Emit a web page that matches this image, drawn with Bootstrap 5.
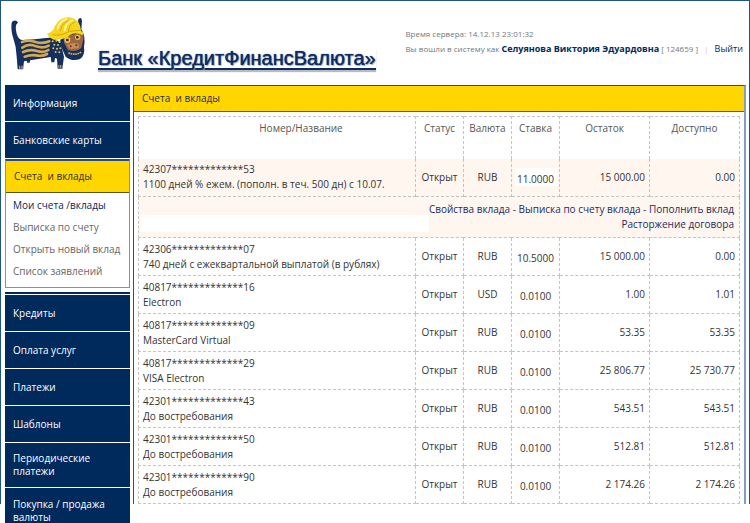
<!DOCTYPE html>
<html lang="ru">
<head>
<meta charset="utf-8">
<meta name="viewport" content="width=device-width, initial-scale=1">
<title>Банк «КредитФинансВалюта»</title>
<link href="https://cdn.jsdelivr.net/npm/bootstrap@5.3.0/dist/css/bootstrap.min.css" rel="stylesheet">
<style>
:root { --navy: #00295c; --gold: #ffd600; --edge: #1f5489; --cream: #fff6ef; }
body { font-family: "Open Sans", "Noto Sans", sans-serif; font-size: 10px; line-height: 15px; color: #333; background: #fff; min-height: 100vh; }
a { color: inherit; text-decoration: none; }
.bank-frame { border: 1px solid var(--edge); border-bottom: 0; }
.bank-top { height: 84px; padding-left: 9px; }
.bank-logo { width: 78px; height: 64px; margin-top: 11px; }
.bank-name { font-family: "Liberation Sans", Arial, sans-serif; font-size: 20px; line-height: 20px; font-weight: 400; color: #0c2c66; border-bottom: 2px solid #0c2c66; box-shadow: 0 2px 1px #bbb; text-shadow: 0 0 1px #0c2c66, 1px 1px 1px #aaa; margin: 47px 0 0 10px; }
.session { font-size: 8px; line-height: 15px; color: #777; margin: 25px 6px 0 0; }
.session a, .session b { font-size: 9px; color: var(--navy); }
.session i { color: #e5b98c; font-style: normal; margin: 0 4px; }
.bank-side { width: 125px; height: 0; margin: 0 3px 0 4px; line-height: 13px; }
.side-item { min-height: 36px; margin-bottom: 1px; padding: 9px 8px; background: var(--navy); color: #fff; }
.side-last { padding-bottom: 0; margin-bottom: 0; }
.side-open { border: 1px solid #7d93b5; border-top: 2px solid #2b4c80; margin-bottom: 4px; }
.side-open .side-item { min-height: 32px; margin: 0; background: var(--gold); color: #2d3320; border-bottom: 1px solid #4c5c20; }
.side-sub { padding: 1px 7px 5px; color: #666; }
.side-sub li { padding: 4px 0; line-height: 14px; white-space: nowrap; }
.side-sub .current { color: var(--navy); }
.side-rule { height: 2px; background: var(--navy); margin-bottom: 1px; }
.bank-main { border: 1px solid var(--edge); border-right: 2px solid #7f9fc4; border-bottom: 0; margin-right: 3px; }
.main-title { font-size: 10px; line-height: 25px; font-weight: 400; background: var(--gold); color: #1f2f40; padding-left: 8px; border-bottom: 1px solid #4c6040; margin-bottom: 4px; }
.accounts-wrap { padding: 0 4px; }
.accounts { table-layout: fixed; width: 100%; border-collapse: collapse; }
.accounts th, .accounts td { border: 1px dashed #c4c4c4; padding: 3px 4px; }
.accounts th { height: 42px; font-weight: 400; color: #555; text-align: center; vertical-align: top; padding-top: 4px; border-bottom: 0; }
.accounts th.c-name { padding-left: 52px; }
.accounts td { height: 38px; }
.accounts .picked td { background: var(--cream); border-top: 0; }
.accounts .c-mid { width: 48px; text-align: center; }
.accounts .c-sum { width: 90px; }
.accounts .sum { text-align: right; }
.accounts .rate { text-align: center; padding-top: 7px; }
.accounts .picked .rate { background: linear-gradient(#fff, #fff) center / 42px 18px no-repeat var(--cream); }
.accounts .acts td { height: 41px; text-align: right; padding: 5px 5px 5px 2px; color: #1b2a63; background: linear-gradient(#fff, #fff) 2px 18px / 288px 17px no-repeat var(--cream); }
</style>
</head>
<body>
<div class="bank-frame">
  <header class="bank-top d-flex align-items-start">
    <svg class="bank-logo flex-shrink-0" viewBox="30 36 234 192" role="img" aria-label="Логотип банка">
      <g fill="#14305f">
        <path d="M35 68C39 58 53 60 54 69C46 73 47 83 49 96C51 109 57 119 67 120L103 118L160 112L182 130L192 170L187 206H173L171 176Q160 170 152 171L72 184L69 208H53L50 170Q49 140 39 112Q32 88 35 68Z"/>
        <path d="M80 174h11l-2 14h-8zM152 168h14l-3 19h-9z"/>
        <path d="M235 58Q245 48 246 63L244 88Q258 110 252 140Q256 166 240 177Q216 186 197 170L178 128L190 98L232 82Z"/>
      </g>
      <g fill="none" stroke="#d7a853" stroke-width="8" stroke-linecap="round">
        <path d="M66 126Q84 119 104 125Q128 133 148 124"/>
        <path d="M67 143Q87 129 108 139Q130 146 146 137"/>
        <path d="M69 156Q90 147 111 153Q131 159 145 150"/>
        <path d="M74 170Q94 163 115 167Q131 168 141 162"/>
      </g>
      <path fill="#9a673e" d="M192 111Q220 107 238 93Q253 98 250 119L244 143Q230 157 204 151L193 130Z"/>
      <path fill="#c98a5c" d="M201 135Q218 125 235 131Q242 149 222 145Q209 151 201 135Z"/>
      <g fill="#f1be52"><circle cx="202" cy="120" r="9"/><circle cx="233" cy="112" r="8"/></g>
      <g fill="#222"><circle cx="202" cy="120" r="4"/><circle cx="232" cy="112" r="4"/></g>
      <g fill="#5c351f"><circle cx="212" cy="139" r="3"/><circle cx="229" cy="136" r="3"/></g>
      <path d="M205 158Q226 168 244 156" fill="none" stroke="#d4b050" stroke-width="5" stroke-dasharray="5 2"/>
      <path fill="#f7d51d" d="M141 101Q161 95 165 78Q179 50 210 52Q240 57 243 93Q254 99 247 105Q225 94 211 105Q190 122 162 119Q148 114 141 101Z"/>
      <path fill="none" stroke="#fff09a" stroke-width="6" stroke-linecap="round" d="M173 86Q178 64 199 58M194 91Q197 69 217 61"/>
      <path fill="none" stroke="#d2a813" stroke-width="3" d="M181 94Q184 72 204 61M205 95Q208 71 225 66M157 104Q185 109 208 94L241 91"/>
      <g fill="#e5c34f"><circle cx="158" cy="124" r="3"/><circle cx="169" cy="122" r="3"/><circle cx="179" cy="126" r="3"/><circle cx="163" cy="134" r="3"/><circle cx="174" cy="135" r="3"/><circle cx="160" cy="145" r="3"/><circle cx="171" cy="146" r="3"/><circle cx="181" cy="145" r="3"/><circle cx="167" cy="156" r="3"/><circle cx="178" cy="157" r="3"/></g>
      <path d="M57 202h13M175 200h12" stroke="#b99a64" stroke-width="10" stroke-dasharray="3 2"/>
    </svg>
    <a href="#" class="bank-name text-nowrap">Банк «КредитФинансВалюта»</a>
    <div class="session ms-auto text-nowrap">
      <div>Время сервера: 14.12.13 23:01:32</div>
      <div>Вы вошли в систему как <b>Селуянова Виктория Эдуардовна</b> [ 124659 ] <i>|</i> <a href="#">Выйти</a></div>
    </div>
  </header>
  <div class="d-flex align-items-start">
    <nav class="bank-side flex-shrink-0" aria-label="Разделы">
      <a href="#" class="side-item d-flex align-items-center">Информация</a>
      <a href="#" class="side-item d-flex align-items-center">Банковские карты</a>
      <div class="side-open">
        <a href="#" class="side-item d-flex align-items-center">Счета&nbsp; и вклады</a>
        <ul class="side-sub list-unstyled mb-0">
          <li class="current"><a href="#">Мои счета /вклады</a></li>
          <li><a href="#">Выписка по счету</a></li>
          <li><a href="#">Открыть новый вклад</a></li>
          <li><a href="#">Список заявлений</a></li>
        </ul>
      </div>
      <div class="side-rule"></div>
      <a href="#" class="side-item d-flex align-items-center">Кредиты</a>
      <a href="#" class="side-item d-flex align-items-center">Оплата услуг</a>
      <a href="#" class="side-item d-flex align-items-center">Платежи</a>
      <a href="#" class="side-item d-flex align-items-center">Шаблоны</a>
      <a href="#" class="side-item d-flex align-items-center">Периодические<br>платежи</a>
      <a href="#" class="side-item side-last d-flex align-items-center">Покупка / продажа<br>валюты</a>
    </nav>
    <main class="bank-main flex-grow-1">
      <h1 class="main-title">Счета&nbsp; и вклады</h1>
      <div class="accounts-wrap">
        <table class="accounts">
          <thead><tr><th class="c-name">Номер/Название</th><th class="c-mid">Статус</th><th class="c-mid">Валюта</th><th class="c-mid">Ставка</th><th class="c-sum">Остаток</th><th class="c-sum">Доступно</th></tr></thead>
          <tbody>
            <tr class="picked"><td>42307*************53<br>1100 дней % ежем. (пополн. в теч. 500 дн) с 10.07.</td><td class="c-mid">Открыт</td><td class="c-mid">RUB</td><td class="rate">11.0000</td><td class="sum">15 000.00</td><td class="sum">0.00</td></tr>
            <tr class="acts"><td colspan="6"><a href="#">Свойства вклада</a> - <a href="#">Выписка по счету вклада</a> - <a href="#">Пополнить вклад</a><br><a href="#">Расторжение договора</a></td></tr>
            <tr><td>42306*************07<br>740 дней с ежеквартальной выплатой (в рублях)</td><td class="c-mid">Открыт</td><td class="c-mid">RUB</td><td class="rate">10.5000</td><td class="sum">15 000.00</td><td class="sum">0.00</td></tr>
            <tr><td>40817*************16<br>Electron</td><td class="c-mid">Открыт</td><td class="c-mid">USD</td><td class="rate">0.0100</td><td class="sum">1.00</td><td class="sum">1.01</td></tr>
            <tr><td>40817*************09<br>MasterCard Virtual</td><td class="c-mid">Открыт</td><td class="c-mid">RUB</td><td class="rate">0.0100</td><td class="sum">53.35</td><td class="sum">53.35</td></tr>
            <tr><td>40817*************29<br>VISA Electron</td><td class="c-mid">Открыт</td><td class="c-mid">RUB</td><td class="rate">0.0100</td><td class="sum">25 806.77</td><td class="sum">25 730.77</td></tr>
            <tr><td>42301*************43<br>До востребования</td><td class="c-mid">Открыт</td><td class="c-mid">RUB</td><td class="rate">0.0100</td><td class="sum">543.51</td><td class="sum">543.51</td></tr>
            <tr><td>42301*************50<br>До востребования</td><td class="c-mid">Открыт</td><td class="c-mid">RUB</td><td class="rate">0.0100</td><td class="sum">512.81</td><td class="sum">512.81</td></tr>
            <tr><td>42301*************90<br>До востребования</td><td class="c-mid">Открыт</td><td class="c-mid">RUB</td><td class="rate">0.0100</td><td class="sum">2 174.26</td><td class="sum">2 174.26</td></tr>
          </tbody>
        </table>
      </div>
    </main>
  </div>
</div>
<script src="https://cdn.jsdelivr.net/npm/bootstrap@5.3.0/dist/js/bootstrap.bundle.min.js"></script>
</body>
</html>
